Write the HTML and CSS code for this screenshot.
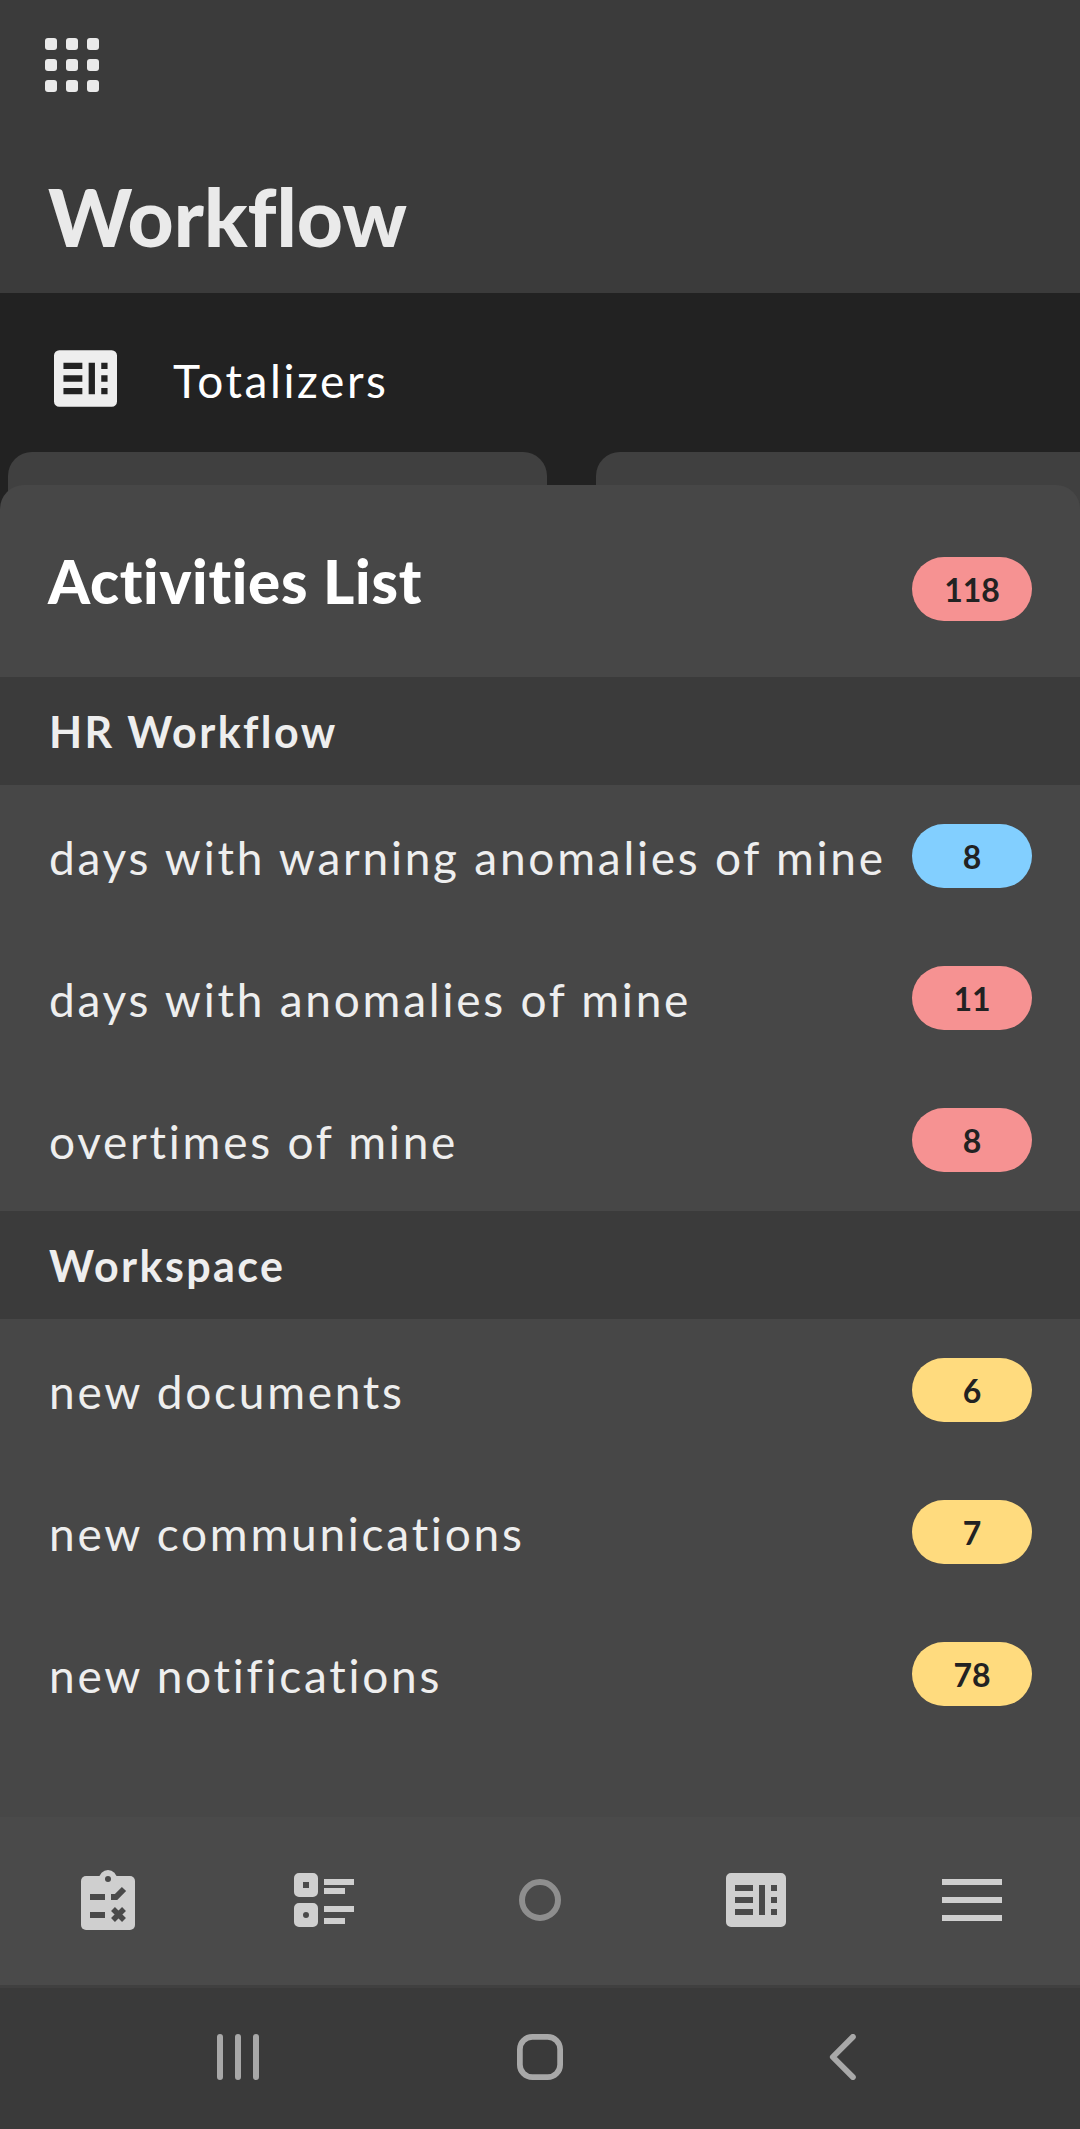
FILE: index.html
```html
<!DOCTYPE html>
<html lang="en">
<head>
    <meta charset="UTF-8">
    <meta name="viewport" content="width=device-width, initial-scale=1.0">
    <title>Workflow</title>
    <link rel="stylesheet" href="styles.css">
</head>
<body>
    <header class="top">
        <div class="apps">
            <span></span><span></span><span></span>
            <span></span><span></span><span></span>
            <span></span><span></span><span></span>
        </div>
        <h1 class="top-title">Workflow</h1>
    </header>

    <section class="tab">
        <svg class="tab-icon" viewBox="0 0 60 54">
            <path fill-rule="evenodd" fill="#eee" d="M5 0H55A5 5 0 0 1 60 5V49A5 5 0 0 1 55 54H5A5 5 0 0 1 0 49V5A5 5 0 0 1 5 0ZM9 12V18H27V12ZM9 24V30H27V24ZM9 36V42H27V36ZM33 12V42H39V12ZM45 12V18H51V12ZM45 24V30H51V24ZM45 36V42H51V36Z"/>
        </svg>
        <span class="tab-label">Totalizers</span>
    </section>

    <div class="cards">
        <div class="card"></div>
        <div class="card"></div>
    </div>

    <main class="panel">
        <div class="panel-head">
            <h2 class="panel-title">Activities List</h2>
            <span class="badge red">118</span>
        </div>

        <h3 class="group">HR Workflow</h3>
        <div class="row"><span class="row-label">days with warning anomalies of mine</span><span class="badge blue">8</span></div>
        <div class="row"><span class="row-label">days with anomalies of mine</span><span class="badge red">11</span></div>
        <div class="row"><span class="row-label">overtimes of mine</span><span class="badge red">8</span></div>

        <h3 class="group">Workspace</h3>
        <div class="row"><span class="row-label">new documents</span><span class="badge yellow">6</span></div>
        <div class="row"><span class="row-label">new communications</span><span class="badge yellow">7</span></div>
        <div class="row"><span class="row-label">new notifications</span><span class="badge yellow">78</span></div>
    </main>

    <footer class="tabbar">
        <svg class="clip" viewBox="0 0 54 60">
            <circle cx="27" cy="9" r="9" fill="#cfcfcf"/>
            <rect y="6" width="54" height="54" rx="5" fill="#cfcfcf"/>
            <circle cx="27" cy="9" r="3" fill="#4a4a4a"/>
            <path fill="#4a4a4a" d="M9 24H24V30H9ZM9 42H24V48H9Z"/>
            <path fill="none" stroke="#4a4a4a" stroke-width="6" d="M30 27H35L43 19"/>
            <path fill="none" stroke="#4a4a4a" stroke-width="5.5" d="M32 39L43 50M43 39L32 50"/>
        </svg>
        <svg class="icon" viewBox="0 0 60 54">
            <path fill-rule="evenodd" fill="#cfcfcf" d="M5 0H19A5 5 0 0 1 24 5V19A5 5 0 0 1 19 24H5A5 5 0 0 1 0 19V5A5 5 0 0 1 5 0ZM9 9V15H15V9Z"/>
            <path fill-rule="evenodd" fill="#cfcfcf" d="M5 30H19A5 5 0 0 1 24 35V49A5 5 0 0 1 19 54H5A5 5 0 0 1 0 49V35A5 5 0 0 1 5 30ZM12 39A3 3 0 1 0 12 45A3 3 0 1 0 12 39Z"/>
            <path fill="#cfcfcf" d="M30 6H60V12H30ZM30 15H51V21H30ZM30 33H60V39H30ZM30 45H51V51H30Z"/>
        </svg>
        <svg class="ring" viewBox="0 0 42 42">
            <circle cx="21" cy="21" r="18" fill="none" stroke="#8e8e8e" stroke-width="6"/>
        </svg>
        <svg class="icon" viewBox="0 0 60 54">
            <path fill-rule="evenodd" fill="#cfcfcf" d="M5 0H55A5 5 0 0 1 60 5V49A5 5 0 0 1 55 54H5A5 5 0 0 1 0 49V5A5 5 0 0 1 5 0ZM9 12V18H27V12ZM9 24V30H27V24ZM9 36V42H27V36ZM33 12V42H39V12ZM45 12V18H51V12ZM45 24V30H51V24ZM45 36V42H51V36Z"/>
        </svg>
        <svg class="icon" viewBox="0 0 60 54">
            <path fill="#cfcfcf" d="M0 6H60V12H0ZM0 24H60V30H0ZM0 42H60V48H0Z"/>
        </svg>
    </footer>

    <nav class="sysnav">
        <svg class="sys" viewBox="0 0 48 46">
            <path fill="none" stroke="#a8a8a8" stroke-width="6" stroke-linecap="round" d="M6 3V43M24 3V43M42 3V43"/>
        </svg>
        <svg class="sys" viewBox="0 0 48 48">
            <rect x="3" y="3" width="42" height="42" rx="13" fill="none" stroke="#a8a8a8" stroke-width="6"/>
        </svg>
        <svg class="sys" viewBox="0 0 30 48">
            <path fill="none" stroke="#a8a8a8" stroke-width="6" stroke-linecap="round" stroke-linejoin="round" d="M26 3L5 24L26 45"/>
        </svg>
    </nav>
</body>
</html>
```

FILE: styles.css
```css
* {
    box-sizing: border-box;
}

html,
body {
    height: 2129px;
    overflow: hidden;
}

body {
    margin: 0;
    background-color: #222;
    font-family: Lato, "Open Sans", sans-serif;
    font-variant-ligatures: none;
    color: #eee;
}

.top {
    height: 293px;
    padding: 38px 48px 0 45px;
    background-color: #3b3b3b;
}

.apps {
    display: grid;
    grid-template-columns: repeat(3, 12px);
    grid-auto-rows: 12px;
    gap: 9px;
}

.apps span {
    background-color: #eaeaea;
    border-radius: 3px;
}

.top-title {
    margin: 76px 0 0 3px;
    font-size: 80px;
    line-height: 96px;
    font-weight: 900;
    color: #eaeaea;
}

.tab {
    display: flex;
    align-items: center;
    height: 159px;
    padding: 0 0 0 54px;
}

.tab-icon {
    width: 63px;
    height: 57px;
    margin-top: 12px;
}

.tab-label {
    margin: 16px 0 0 56px;
    font-size: 46px;
    font-weight: 400;
    letter-spacing: 2.6px;
    color: #fff;
}

.cards {
    display: flex;
    gap: 49px;
    height: 57px;
    padding-left: 8px;
    overflow: hidden;
}

.card {
    flex: 0 0 539px;
    height: 57px;
    background-color: #404040;
    border-radius: 24px 24px 0 0;
}

.card + .card {
    flex-basis: 520px;
}

.panel {
    position: relative;
    height: 1332px;
    margin-top: -24px;
    background-color: #474747;
    border-radius: 24px 24px 0 0;
}

.panel-head {
    display: flex;
    justify-content: space-between;
    align-items: center;
    height: 192px;
    padding: 16px 48px 0;
}

.panel-title {
    margin: -17px 0 0;
    font-size: 60px;
    font-weight: 900;
    letter-spacing: 0.7px;
    color: #fff;
}

.group {
    display: flex;
    align-items: center;
    height: 108px;
    margin: 0;
    padding: 0 49px;
    background-color: #3b3b3b;
    font-size: 43px;
    font-weight: 700;
    letter-spacing: 2.4px;
    color: #eee;
}

.row {
    display: flex;
    justify-content: space-between;
    align-items: center;
    height: 142px;
    padding: 0 48px 0 49px;
}

.row-label {
    margin-top: 2px;
    font-size: 46px;
    font-weight: 400;
    letter-spacing: 2.75px;
    color: #eee;
    white-space: nowrap;
}

.badge {
    flex: none;
    width: 120px;
    height: 64px;
    border-radius: 32px;
    font-size: 32px;
    font-weight: 700;
    line-height: 66px;
    text-align: center;
    color: #222;
}

.red {
    background-color: #f69292;
}

.blue {
    background-color: #82cfff;
}

.yellow {
    background-color: #ffdb7e;
}

.tabbar {
    display: grid;
    grid-template-columns: repeat(5, 1fr);
    justify-items: center;
    align-items: center;
    height: 171px;
    padding-bottom: 3px;
    background-color: #4a4a4a;
    border-bottom: 3px solid #404040;
}

.clip {
    width: 54px;
    height: 60px;
}

.icon {
    width: 60px;
    height: 54px;
}

.ring {
    width: 42px;
    height: 42px;
}

.sysnav {
    display: grid;
    grid-template-columns: repeat(3, 302px);
    justify-content: center;
    justify-items: center;
    align-items: center;
    height: 141px;
    padding-bottom: 4px;
    background-color: #3a3a3a;
}

.sys {
    height: 46px;
}
```
